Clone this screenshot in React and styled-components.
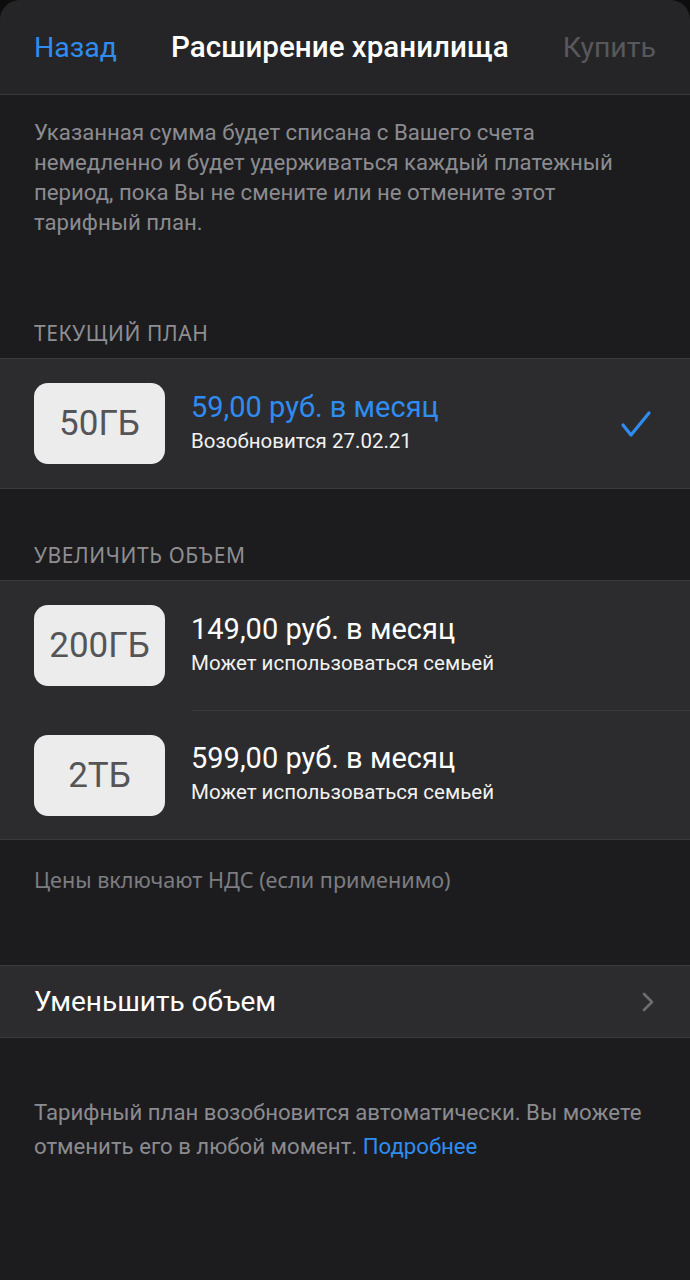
import React from 'react';
import styled, { createGlobalStyle } from 'styled-components';

const GlobalStyle = createGlobalStyle`
  html, body {
    margin: 0;
    padding: 0;
    background: #0d0d0e;
  }
  * { box-sizing: border-box; }
`;

const Sheet = styled.div`
  width: 690px;
  min-height: 1280px;
  background: #1c1c1e;
  border-radius: 20px 20px 0 0;
  overflow: hidden;
  font-family: Roboto, "Noto Sans", sans-serif;
  color: #fff;
`;

const NavBar = styled.div`
  height: 95px;
  display: flex;
  align-items: center;
  justify-content: space-between;
  padding: 0 34px;
  background: #252527;
  border-bottom: 1px solid #38383a;
`;

const NavButton = styled.span`
  font-size: 28.5px;
  color: ${p => (p.disabled ? '#58585c' : '#2f8cf0')};
`;

const Title = styled.span`
  font-size: 29.6px;
  font-weight: 500;
  color: #fff;
`;

const Note = styled.p`
  margin: 0;
  padding: ${p => p.pad || '0 34px'};
  font-size: 22.2px;
  line-height: ${p => p.lh || 30}px;
  color: #8b8b90;
`;

const SmallNote = styled.p`
  margin: 0;
  padding: ${p => p.pad};
  font-family: "Noto Sans", sans-serif;
  font-size: 21.6px;
  line-height: 26px;
  color: #7c7c81;
`;

const SectionHeader = styled.div`
  padding: ${p => p.pad};
  font-family: "Noto Sans", sans-serif;
  font-size: 21px;
  line-height: 26px;
  letter-spacing: 0.6px;
  color: #8e8e93;
  text-transform: uppercase;
`;

const Group = styled.div`
  background: #2c2c2e;
  border-top: 1px solid #3a3a3c;
  border-bottom: 1px solid #3a3a3c;
`;

const PlanRow = styled.div`
  height: ${p => p.h || 129}px;
  display: flex;
  align-items: center;
  padding: 0 34px;
  gap: 26px;
`;

const Separator = styled.div`
  height: 1px;
  background: #3a3a3c;
  margin-left: 191px;
`;

const Tile = styled.div`
  width: 131px;
  height: 81px;
  flex: none;
  border-radius: 14px;
  background: #ececec;
  display: flex;
  align-items: center;
  justify-content: center;
  font-size: 35px;
  color: #555557;
`;

const Info = styled.div`
  flex: 1;
  display: flex;
  flex-direction: column;
  gap: 6px;
  padding-bottom: 4px;
`;

const Price = styled.div`
  font-size: 29px;
  line-height: 32px;
  color: ${p => (p.active ? '#2f8cf0' : '#fff')};
`;

const Sub = styled.div`
  font-size: 20.5px;
  line-height: 24px;
  color: #f2f2f2;
`;

const Check = styled.svg`
  width: 32px;
  height: 28px;
  flex: none;
  margin-right: 4px;
`;

const LinkRow = styled.div`
  height: 71px;
  display: flex;
  align-items: center;
  justify-content: space-between;
  padding: 0 34px;
  font-size: 28px;
  color: #fff;
`;

const Chevron = styled.svg`
  width: 14px;
  height: 20px;
  margin-right: 1px;
`;

const Link = styled.span`
  color: #2f8cf0;
`;

const plans = [
  { size: '200ГБ', price: '149,00 руб. в месяц' },
  { size: '2ТБ', price: '599,00 руб. в месяц' },
];

export default function App() {
  return (
    <Sheet>
      <GlobalStyle />
      <NavBar>
        <NavButton>Назад</NavButton>
        <Title>Расширение хранилища</Title>
        <NavButton disabled>Купить</NavButton>
      </NavBar>

      <Note pad="22px 34px 0">
        Указанная сумма будет списана с Вашего счета<br />
        немедленно и будет удерживаться каждый платежный<br />
        период, пока Вы не смените или не отмените этот<br />
        тарифный план.
      </Note>

      <SectionHeader pad="83px 34px 12px">Текущий план</SectionHeader>
      <Group>
        <PlanRow>
          <Tile>50ГБ</Tile>
          <Info>
            <Price active>59,00 руб. в месяц</Price>
            <Sub>Возобновится 27.02.21</Sub>
          </Info>
          <Check viewBox="0 0 32 28">
            <polyline points="3,15 11,25 29,3" fill="none" stroke="#2f8cf0" strokeWidth="3.2" strokeLinecap="round" strokeLinejoin="round" />
          </Check>
        </PlanRow>
      </Group>

      <SectionHeader pad="53px 34px 12px">Увеличить объем</SectionHeader>
      <Group>
        {plans.map((p, i) => (
          <React.Fragment key={p.size}>
            {i > 0 && <Separator />}
            <PlanRow h={i > 0 ? 128 : 129}>
              <Tile>{p.size}</Tile>
              <Info>
                <Price>{p.price}</Price>
                <Sub>Может использоваться семьей</Sub>
              </Info>
            </PlanRow>
          </React.Fragment>
        ))}
      </Group>

      <SmallNote pad="27px 34px 72px">Цены включают НДС (если применимо)</SmallNote>

      <Group>
        <LinkRow>
          <span>Уменьшить объем</span>
          <Chevron viewBox="0 0 14 20">
            <polyline points="3,2 11,10 3,18" fill="none" stroke="#6c6c71" strokeWidth="2.6" strokeLinecap="round" strokeLinejoin="round" />
          </Chevron>
        </LinkRow>
      </Group>

      <Note pad="57px 34px 0" lh={34}>
        Тарифный план возобновится автоматически. Вы можете<br />
        отменить его в любой момент. <Link>Подробнее</Link>
      </Note>
    </Sheet>
  );
}
